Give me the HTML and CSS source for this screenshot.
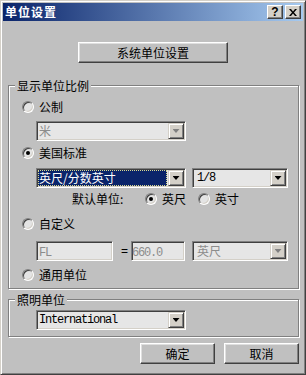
FILE: index.html
```html
<!DOCTYPE html>
<html lang="zh-CN">
<head>
    <meta charset="UTF-8">
    <meta name="viewport" content="width=device-width, initial-scale=1.0">
    <title>单位设置</title>
    <link rel="stylesheet" href="styles.css">
</head>
<body>
    <div class="window">
        <div class="titlebar">
            <span class="title">单位设置</span>
            <div class="title-buttons">
                <button class="tbtn tbtn-help">?</button>
                <button class="tbtn">
                    <svg width="8" height="7" viewBox="0 0 8 7">
                        <path d="M0 0h2l2 2.5L6 0h2L5 3.5 8 7H6L4 4.5 2 7H0l3-3.5z" fill="#000"/>
                    </svg>
                </button>
            </div>
        </div>

        <div class="content">
            <button class="btn btn-system">系统单位设置</button>

            <fieldset class="group group-scale">
                <legend>显示单位比例</legend>

                <div class="radio-row">
                    <span class="radio"></span>公制
                </div>
                <div class="combo combo-wide combo-metric disabled">
                    <span class="combo-text">米</span>
                    <span class="drop"></span>
                </div>

                <div class="radio-row row-us">
                    <span class="radio checked"></span>美国标准
                </div>
                <div class="combo-line">
                    <div class="combo combo-wide">
                        <span class="combo-text selected">英尺/分数英寸</span>
                        <span class="drop"></span>
                    </div>
                    <div class="combo combo-small">
                        <span class="combo-text mono">1/8</span>
                        <span class="drop"></span>
                    </div>
                </div>
                <div class="default-line">
                    <span class="default-label">默认单位:</span>
                    <span class="radio checked"></span><span class="opt">英尺</span>
                    <span class="radio"></span><span class="opt">英寸</span>
                </div>

                <div class="radio-row row-custom">
                    <span class="radio"></span>自定义
                </div>
                <div class="custom-line">
                    <div class="field field-name"><span class="mono">FL</span></div>
                    <span class="equals">=</span>
                    <div class="field field-value"><span class="mono">660.0</span></div>
                    <div class="combo combo-small disabled">
                        <span class="combo-text">英尺</span>
                        <span class="drop"></span>
                    </div>
                </div>

                <div class="radio-row row-generic">
                    <span class="radio"></span>通用单位
                </div>
            </fieldset>

            <fieldset class="group group-light">
                <legend>照明单位</legend>
                <div class="combo combo-wide combo-light">
                    <span class="combo-text mono">International</span>
                    <span class="drop"></span>
                </div>
            </fieldset>

            <div class="actions">
                <button class="btn btn-action">确定</button>
                <button class="btn btn-action">取消</button>
            </div>
        </div>
    </div>
</body>
</html>
```

FILE: styles.css
```css
body {
    margin: 0;
    background-color: #c0c0c0;
    font-family: 'Noto Sans CJK SC', sans-serif;
    font-size: 12px;
    color: #000;
}

.window {
    width: 306px;
    height: 375px;
    box-sizing: border-box;
    background-color: #c0c0c0;
    border: 1px solid;
    border-color: #d4d0c8 #404040 #404040 #d4d0c8;
    box-shadow: inset 1px 1px 0 #fff, inset -1px -1px 0 #808080;
    padding: 2px;
    display: flex;
    flex-direction: column;
}

.titlebar {
    height: 18px;
    display: flex;
    align-items: center;
    background: linear-gradient(to right, #0a246a, #a6caf0);
}

.title {
    padding-left: 2px;
    color: #fff;
    font-weight: bold;
    font-size: 12px;
    line-height: 14px;
    letter-spacing: 1px;
}

.title-buttons {
    margin-left: auto;
    display: flex;
    gap: 2px;
    padding-right: 2px;
}

.tbtn {
    width: 16px;
    height: 14px;
    box-sizing: border-box;
    padding: 0;
    background-color: #d4d0c8;
    border: 1px solid;
    border-color: #fff #404040 #404040 #fff;
    box-shadow: inset -1px -1px 0 #808080;
    display: flex;
    align-items: center;
    justify-content: center;
}

.tbtn-help {
    font-family: 'Liberation Sans', sans-serif;
    font-weight: bold;
    font-size: 12px;
    line-height: 12px;
}

.content {
    flex: 1;
    display: flex;
    flex-direction: column;
}

.btn {
    box-sizing: border-box;
    padding: 0;
    background-color: #c0c0c0;
    border: 1px solid;
    border-color: #fff #404040 #404040 #fff;
    box-shadow: inset -1px -1px 0 #808080, inset 1px 1px 0 #dfdfdf;
    font-family: 'Noto Sans CJK SC', sans-serif;
    font-size: 12px;
    line-height: 12px;
    color: #000;
}

.btn-system {
    width: 150px;
    height: 21px;
    margin: 21px auto 0;
}

.group {
    margin: 0 4px 0 5px;
    padding: 0;
    min-inline-size: 0;
    border: 1px solid #808080;
    box-shadow: inset 1px 1px 0 #fff, 1px 1px 0 #fff;
}

.group legend {
    margin-left: 6px;
    padding: 0 2px;
    height: 13px;
    line-height: 13px;
    background-color: #c0c0c0;
}

.group-scale {
    margin-top: 16px;
    padding-bottom: 7px;
}

.group-light {
    margin-top: 4px;
    padding-bottom: 6px;
}

.radio-row {
    display: flex;
    align-items: center;
    height: 12px;
    line-height: 12px;
    margin-left: 13px;
    margin-top: 9px;
}

.row-us {
    margin-top: 6px;
}

.row-custom {
    margin-top: 13px;
}

.row-generic {
    margin-top: 8px;
}

.radio {
    width: 12px;
    height: 12px;
    box-sizing: border-box;
    flex: none;
    border-radius: 50%;
    border: 1px solid;
    border-color: #808080 #fff #fff #808080;
    box-shadow: inset 1px 1px 0 #404040, inset -1px -1px 0 #d4d0c8;
    background-color: #e4e4e4;
    margin-right: 5px;
    display: flex;
    align-items: center;
    justify-content: center;
}

.radio.checked::after {
    content: "";
    width: 4px;
    height: 4px;
    border-radius: 50%;
    background-color: #000;
}

.combo {
    height: 20px;
    box-sizing: border-box;
    display: flex;
    padding: 1px;
    border: 1px solid;
    border-color: #808080 #fff #fff #808080;
    box-shadow: inset 1px 1px 0 #404040, inset -1px -1px 0 #d4d0c8;
    background-color: #e6e6e6;
}

.combo-wide {
    width: 150px;
}

.combo-small {
    width: 96px;
}

.combo-metric {
    margin-left: 27px;
    margin-top: 8px;
}

.combo-light {
    margin-left: 27px;
    margin-top: 4px;
}

.combo-text {
    flex: 1;
    line-height: 16px;
    padding-left: 1px;
    margin-right: 1px;
    white-space: nowrap;
    overflow: hidden;
}

.combo-small .combo-text {
    padding-left: 3px;
}

.combo-text.selected {
    background-color: #0a246a;
    color: #fff;
    outline: 1px dotted #d8d890;
    outline-offset: -1px;
}

.disabled .combo-text {
    color: #8c8c8c;
}

.drop {
    width: 16px;
    height: 16px;
    box-sizing: border-box;
    flex: none;
    background-color: #d4d0c8;
    border: 1px solid;
    border-color: #d4d0c8 #404040 #404040 #d4d0c8;
    box-shadow: inset 1px 1px 0 #fff, inset -1px -1px 0 #808080;
    display: flex;
    align-items: center;
    justify-content: center;
}

.drop::after {
    content: "";
    width: 7px;
    height: 4px;
    background-color: #000;
    clip-path: polygon(0 0, 100% 0, 50% 100%);
}

.disabled .drop::after {
    background-color: #808080;
}

.mono {
    font-family: 'Liberation Mono', monospace;
    font-size: 12px;
    letter-spacing: -1.2px;
}

.combo-line {
    display: flex;
    gap: 6px;
    margin-left: 27px;
    margin-top: 9px;
}

.default-line {
    display: flex;
    align-items: center;
    height: 12px;
    line-height: 12px;
    margin-left: 63px;
    margin-top: 5px;
}

.default-label {
    width: 73px;
}

.opt {
    margin-right: 12px;
}

.custom-line {
    display: flex;
    align-items: center;
    margin-left: 27px;
    margin-top: 11px;
}

.field {
    height: 20px;
    box-sizing: border-box;
    padding: 1px;
    border: 1px solid;
    border-color: #808080 #fff #fff #808080;
    box-shadow: inset 1px 1px 0 #404040, inset -1px -1px 0 #d4d0c8;
    background-color: #e6e6e6;
    color: #8c8c8c;
    line-height: 16px;
    overflow: hidden;
}

.field-name {
    width: 77px;
    padding-left: 2px;
}

.field-value {
    width: 54px;
    padding-left: 0;
}

.equals {
    font-family: 'Liberation Sans', sans-serif;
    width: 7px;
    margin: 0 3px 0 8px;
}

.custom-line .combo {
    margin-left: 7px;
}

.actions {
    display: flex;
    justify-content: flex-end;
    gap: 9px;
    margin: 6px 4px 0 0;
}

.btn-action {
    width: 75px;
    height: 21px;
}
```
